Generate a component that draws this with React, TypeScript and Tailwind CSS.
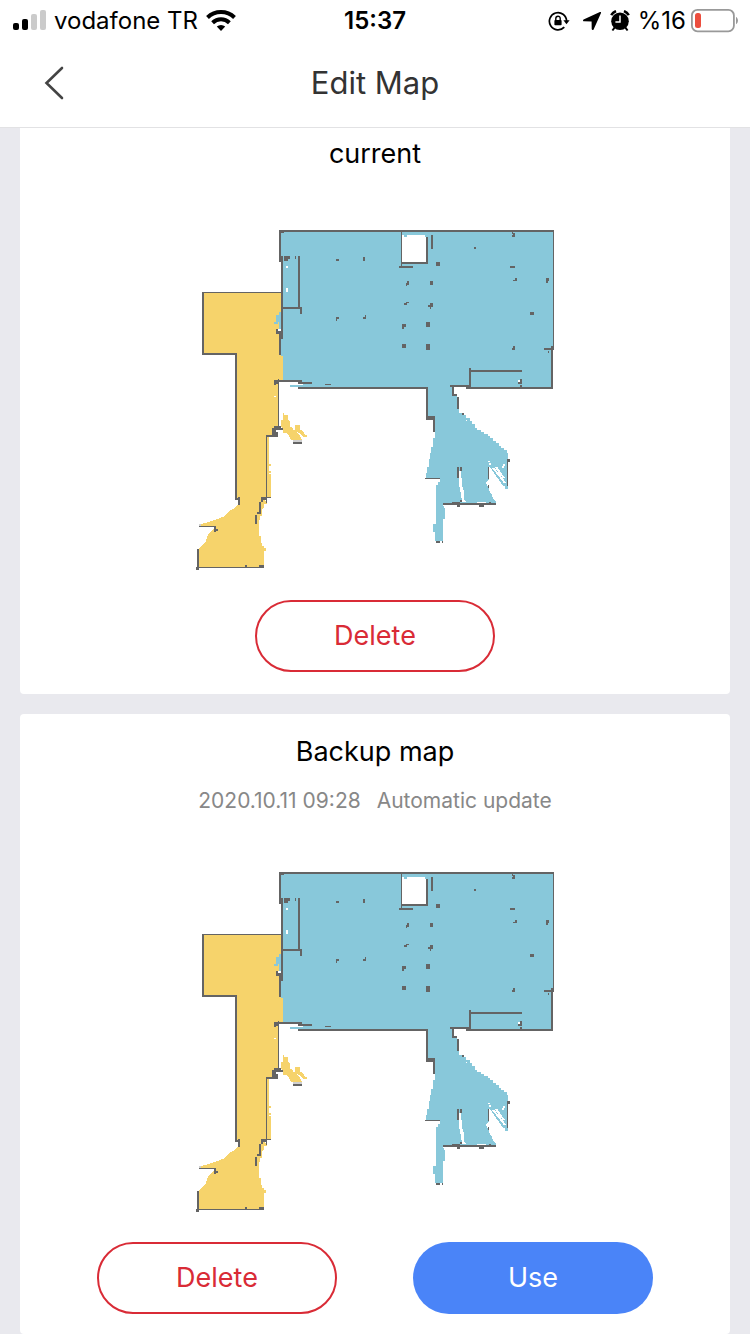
import type { ReactNode } from "react";

type Rect = [number, number, number, number];

// [x, y, width, height] of every wall and obstacle found by the vacuum
const WALLS: Rect[] = [
  // outer walls of the blue room
  [279, 230, 275, 2],
  [279, 230, 2, 32],
  [281, 230, 3, 3],
  [281, 256, 2, 83],
  [279, 331, 2, 24],
  [276, 331, 5, 3],
  [276, 329, 2, 3],
  [553, 230, 1, 120],
  [551, 346, 3, 4],
  [544, 348, 9, 2],
  [551, 350, 2, 39],
  [466, 387, 87, 2],
  [450, 385, 21, 2],
  [298, 387, 130, 2],
  [274, 380, 28, 2],
  [274, 380, 4, 4],
  [274, 384, 2, 1],
  [298, 382, 14, 2],
  [325, 384, 6, 1],
  // inner walls
  [298, 256, 2, 53],
  [283, 307, 19, 2],
  [300, 309, 2, 5],
  [284, 256, 6, 3],
  [284, 259, 4, 2],
  [295, 256, 1, 3],
  [401, 232, 1, 34],
  [402, 262, 26, 2],
  [426, 237, 2, 27],
  [431, 235, 2, 14],
  [399, 266, 14, 2],
  [469, 368, 2, 20],
  [471, 370, 51, 2],
  [520, 379, 2, 5],
  [518, 382, 2, 2],
  [520, 385, 2, 2],
  // small obstacles
  [336, 259, 3, 2],
  [363, 257, 2, 4],
  [336, 317, 3, 2],
  [336, 319, 1, 2],
  [363, 317, 3, 2],
  [365, 315, 1, 2],
  [436, 262, 4, 4],
  [474, 247, 2, 2],
  [512, 232, 1, 2],
  [513, 233, 2, 4],
  [512, 235, 1, 2],
  [510, 266, 5, 2],
  [515, 278, 2, 3],
  [513, 280, 2, 1],
  [546, 278, 3, 3],
  [546, 281, 2, 2],
  [530, 312, 4, 3],
  [513, 346, 2, 4],
  [512, 348, 1, 2],
  [548, 351, 1, 2],
  [407, 281, 2, 4],
  [406, 283, 1, 3],
  [430, 281, 3, 4],
  [404, 303, 3, 2],
  [406, 302, 3, 1],
  [430, 303, 3, 4],
  [428, 305, 3, 2],
  [430, 307, 1, 2],
  [402, 324, 4, 3],
  [402, 327, 2, 2],
  [426, 322, 4, 5],
  [402, 344, 4, 4],
  [426, 344, 4, 6],
  // passage below the blue room
  [426, 387, 2, 33],
  [426, 416, 9, 4],
  [433, 420, 2, 12],
  [452, 387, 2, 9],
  [454, 394, 3, 2],
  [457, 397, 2, 12],
  [462, 413, 2, 2],
  [425, 478, 15, 1],
  [457, 467, 2, 11],
  [460, 467, 2, 4],
  [460, 500, 2, 2],
  [452, 502, 8, 2],
  [443, 503, 53, 2],
  [457, 505, 3, 2],
  [479, 505, 5, 2],
  [489, 502, 2, 1],
  [488, 467, 1, 12],
  [488, 485, 1, 3],
  [507, 462, 1, 24],
  [507, 459, 3, 3],
  [436, 541, 4, 2],
  [442, 541, 1, 2],
  // yellow room
  [202, 292, 79, 1],
  [202, 292, 2, 63],
  [202, 353, 35, 2],
  [235, 353, 2, 147],
  [235, 498, 5, 2],
  [238, 497, 2, 8],
  [278, 379, 1, 48],
  [274, 426, 7, 2],
  [272, 428, 11, 2],
  [272, 430, 4, 5],
  [276, 432, 2, 3],
  [266, 435, 12, 2],
  [266, 437, 1, 61],
  [261, 497, 10, 1],
  [261, 498, 6, 2],
  [261, 500, 2, 2],
  [266, 500, 1, 3],
  [259, 502, 2, 12],
  [257, 512, 4, 2],
  [255, 515, 2, 9],
  [199, 526, 17, 1],
  [214, 527, 2, 5],
  [216, 529, 2, 2],
  [197, 549, 2, 21],
  [196, 567, 3, 3],
  [199, 567, 65, 1],
  [245, 565, 2, 2],
  [259, 565, 5, 2],
  [293, 442, 9, 2],
];

// unscanned spots inside the rooms
const GAPS: Rect[] = [
  [402, 235, 24, 27],
  [284, 257, 2, 2],
  [286, 266, 2, 2],
  [286, 288, 2, 4],
  [278, 329, 3, 2],
  [518, 380, 2, 2],
  [466, 420, 1, 1],
  [274, 396, 2, 1],
  [269, 466, 2, 5],
  [269, 473, 2, 1],
  [477, 502, 9, 1],
  [488, 461, 2, 1],
  [489, 463, 2, 2],
  [503, 464, 2, 2],
  [502, 466, 2, 2],
];

const BLUE_PARTS: Rect[] = [
  [290, 385, 13, 2],
  [404, 235, 3, 2],
  [425, 235, 1, 2],
  [279, 312, 2, 17],
  [276, 315, 3, 7],
  [274, 322, 4, 2],
];

const BLUE_ROOM =
  "281,232 553,232 553,350 551,350 551,387 471,387 471,385 452,385 452,388 454,396 457,396 457,409 459,409 459,413 462,413 462,415 466,415 466,418 470,418 470,421 472,421 472,424 475,424 475,428 477,428 477,430 481,430 481,432 484,432 484,434 488,434 488,436 490,436 490,438 493,438 493,441 496,441 496,443 499,443 499,446 501,446 501,448 504,448 504,450 507,450 507,453 508,453 508,489 505,489 505,486 503,486 490,467 489,467 489,479 486,482 487,486 489,488 490,493 492,495 493,499 496,501 496,503 443,503 443,505 445,509 445,519 443,519 443,541 435,541 435,532 433,532 433,524 436,524 436,485 438,485 438,482 440,482 440,478 426,478 426,473 427,473 427,467 429,467 429,459 430,459 430,453 431,453 431,447 433,447 433,438 435,438 435,416 428,416 428,387 303,387 303,382 283,382 283,356 281,356";

const YELLOW_ROOM =
  "204,293 281,293 281,355 283,355 283,380 278,380 278,428 274,428 274,435 269,435 269,464 271,464 271,497 264,500 267,502 267,504 264,504 264,508 262,509 262,516 260,516 259,524 259,536 261,536 261,543 262,543 262,546 264,546 264,548 266,548 266,551 264,551 264,567 199,567 199,549 202,545 206,541 208,535 211,531 214,529 214,526 199,526 199,524 206,523 214,520 220,518 225,516 228,512 233,509 237,506 239,503 237,498 237,353 204,353";

const YELLOW_DEBRIS =
  "283,413 284,413 284,415 288,415 288,420 290,422 290,427 293,428 293,430 295,430 295,425 300,425 300,430 303,431 305,435 307,435 307,437 303,437 300,433 296,432 300,436 302,440 291,440 289,436 287,433 283,433 283,428 281,427 281,420 283,420";

function Rects({ items, fill }: { items: Rect[]; fill: string }) {
  return (
    <g fill={fill}>
      {items.map(([x, y, width, height], i) => (
        <rect key={i} x={x} y={y} width={width} height={height} />
      ))}
    </g>
  );
}

function FloorMap({ label }: { label: string }) {
  return (
    <svg
      role="img"
      aria-label={label}
      viewBox="190 224 370 352"
      shapeRendering="crispEdges"
      className="mx-auto block w-[370px] max-w-full"
    >
      <polygon points={YELLOW_ROOM} fill="#f6d36b" />
      <polygon points={YELLOW_DEBRIS} fill="#f6d36b" />
      <polygon points={BLUE_ROOM} fill="#88c8da" />
      <Rects items={GAPS} fill="#fff" />
      <Rects items={BLUE_PARTS} fill="#88c8da" />
      <polygon points="458,471 461,471 462,485 464,492 464,500 467,502 462,502 461,494 459,484" fill="#fff" />
      <path
        d="M493 468L499 475L505 483M496 467L500 473L504 478"
        stroke="#fff"
        strokeWidth="2"
        fill="none"
      />
      <Rects items={WALLS} fill="#646464" />
      <rect x="293" y="440" width="9" height="2" fill="#d0d0d0" />
      <rect x="199" y="524" width="2" height="2" fill="#d0d0d0" />
    </svg>
  );
}

function StatusBar() {
  return (
    <div className="flex h-[42px] items-center justify-between px-3 text-2xl text-black">
      <div className="flex flex-1 items-center gap-2">
        <svg viewBox="0 0 34 22" className="h-[22px] w-[34px]" aria-hidden="true">
          <rect x="1" y="13" width="6" height="7" rx="2" />
          <rect x="10" y="9" width="6" height="11" rx="2" />
          <rect x="19" y="4" width="6" height="16" rx="2" fill="#cbcbcb" />
          <rect x="28" y="0" width="6" height="20" rx="2" fill="#cbcbcb" />
        </svg>
        <span>vodafone TR</span>
        <svg viewBox="0 0 30 22" className="h-[22px] w-[30px]" aria-hidden="true">
          <g fill="none" stroke="#000" strokeWidth="4">
            <path d="M1.500 7.500a19.500 19.500 0 0 1 27 0" />
            <path d="M6.600 12.700a12.200 12.200 0 0 1 16.800 0" />
          </g>
          <path d="M15 21l4.200-4.400a6 6 0 0 0-8.400 0z" />
        </svg>
      </div>
      <span className="font-semibold">15:37</span>
      <div className="flex flex-1 items-center justify-end gap-2">
        <svg viewBox="0 0 22 20" className="h-5 w-[22px]" aria-hidden="true">
          <path
            d="M16.3 16.1A8.6 8.6 0 1 1 18.6 10"
            fill="none"
            stroke="#000"
            strokeWidth="1.7"
          />
          <path d="M15.4 9.3h6.2l-3.1 4z" />
          <rect x="6.4" y="8.9" width="7.2" height="5.4" rx="0.8" />
          <path
            d="M7.800 9V7.400a2.200 2.200 0 0 1 4.400 0V9"
            fill="none"
            stroke="#000"
            strokeWidth="1.4"
          />
        </svg>
        <svg viewBox="0 0 20 20" className="ml-1 size-5" aria-hidden="true">
          <path d="M17.900 1L1.600 8.400c-1 .5-.7 1.800.4 1.900l7.600.1.100 7.600c.1 1.200 1.400 1.400 1.900.4L19 2.100c.3-.8-.3-1.400-1.100-1.100z" />
        </svg>
        <svg viewBox="0 0 20 22" className="h-[22px] w-5" aria-hidden="true">
          <circle cx="10" cy="11.3" r="8.8" />
          <path
            d="M1.200 5.100a11 11 0 0 1 4.800-4M18.800 5.100a11 11 0 0 0-4.800-4"
            stroke="#000"
            strokeWidth="2.6"
            fill="none"
          />
          <path d="M4.600 17.700l-2.200 2.800M15.400 17.700l2.200 2.800" stroke="#000" strokeWidth="2" />
          <path d="M10 5.500v6.400H5.400" stroke="#fff" strokeWidth="1.500" fill="none" />
        </svg>
        <div className="flex items-center gap-1">
          <span>%16</span>
          <svg viewBox="0 0 48 24" className="h-6 w-12" aria-hidden="true">
            <rect
              x="1.9"
              y="0.9"
              width="42"
              height="21.4"
              rx="5.500"
              fill="none"
              stroke="#999"
              strokeWidth="1.8"
            />
            <rect x="5" y="4" width="6" height="15" rx="2.500" fill="#ec4e3e" />
            <path d="M46 8c2.600 1.200 2.600 6 0 7.200z" fill="#999" />
          </svg>
        </div>
      </div>
    </div>
  );
}

function Header() {
  return (
    <header className="border-b border-[#e2e2e4] bg-white">
      <StatusBar />
      <div className="grid grid-cols-[1fr_auto_1fr] items-center px-10 pb-[3px]">
        <button type="button" aria-label="Back" className="flex h-[82px] w-8 items-center">
          <svg viewBox="0 0 28 36" className="h-9 w-7" aria-hidden="true">
            <path
              d="M22 3L6.500 18L22 33"
              fill="none"
              stroke="#444"
              strokeWidth="2.600"
              strokeLinecap="round"
            />
          </svg>
        </button>
        <h1 className="text-[31px] text-[#333]">Edit Map</h1>
      </div>
    </header>
  );
}

function DeleteButton() {
  return (
    <button
      type="button"
      className="h-[72px] w-60 rounded-full border-2 border-[#d92b36] text-[27px] text-[#d92b36]"
    >
      Delete
    </button>
  );
}

function MapCard({ className, children }: { className: string; children: ReactNode }) {
  return <section className={`bg-white ${className}`}>{children}</section>;
}

export default function App() {
  return (
    <div className="min-h-screen bg-[#e9e9ee] font-['Inter','Liberation_Sans',sans-serif]">
      <Header />
      <main className="flex flex-col gap-5 px-5">
        <MapCard className="rounded-b">
          <h2 className="pt-2 text-center text-[27px] leading-9 text-black">current</h2>
          <div className="pt-[52px]">
            <FloorMap label="Current map" />
          </div>
          <div className="flex justify-center pt-6 pb-[22px]">
            <DeleteButton />
          </div>
        </MapCard>
        <MapCard className="rounded">
          <h2 className="pt-5 text-center text-[27px] leading-9 text-black">Backup map</h2>
          <p className="flex justify-center gap-4 pt-[17px] text-[21px] leading-7 text-[#888]">
            <time dateTime="2020-10-11T09:28">2020.10.11 09:28</time>
            <span>Automatic update</span>
          </p>
          <div className="pt-[51px]">
            <FloorMap label="Backup map" />
          </div>
          <div className="flex justify-center gap-[76px] pt-6 pb-5">
            <DeleteButton />
            <button
              type="button"
              className="h-[72px] w-60 rounded-full bg-[#4a84f8] text-[27px] text-white"
            >
              Use
            </button>
          </div>
        </MapCard>
      </main>
    </div>
  );
}
